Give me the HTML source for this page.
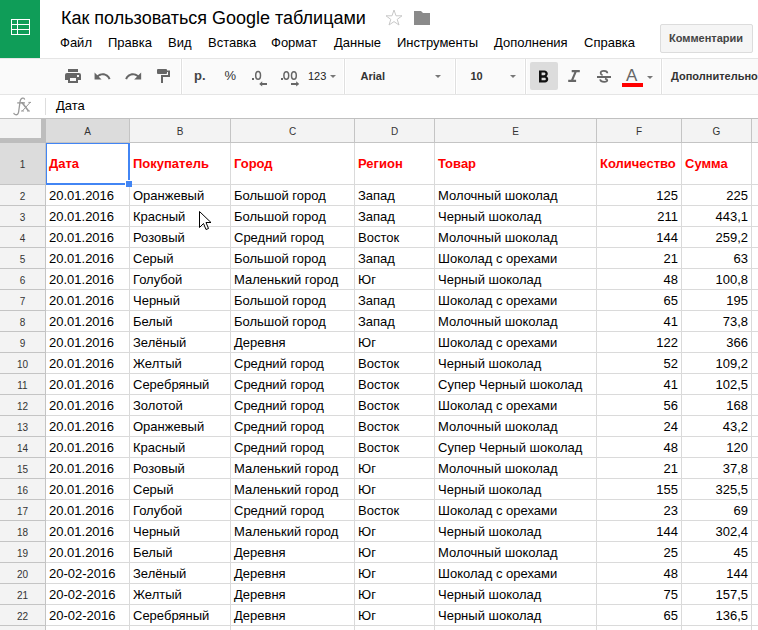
<!DOCTYPE html>
<html><head><meta charset="utf-8">
<style>
html,body{margin:0;padding:0;}
body{width:758px;height:630px;overflow:hidden;position:relative;background:#fff;font-family:"Liberation Sans",sans-serif;}
.a{position:absolute;}
.t{position:absolute;white-space:nowrap;line-height:1;}
/* header */
#logo{left:0;top:0;width:40px;height:58px;background:#0f9d58;}
#title{left:61px;top:9px;font-size:18px;color:#000;}
.menu{top:36px;font-size:13px;color:#000;}
#btn{left:660px;top:24px;width:91px;height:27px;border:1px solid #dcdcdc;border-radius:2px;background:#f5f5f5;}
#btn span{position:absolute;left:8px;top:8px;font-size:11px;font-weight:bold;color:#444;white-space:nowrap;line-height:1;}
/* toolbar */
#tb{left:0;top:58px;width:758px;height:35px;border-top:1px solid #e5e5e5;border-bottom:1px solid #e5e5e5;background:#fafafa;}
.sep{position:absolute;top:59px;width:1px;height:35px;background:#e0e0e0;box-shadow:-1px 0 #fff,1px 0 #fff;}
.tbt{top:69px;font-size:11px;font-weight:bold;color:#333;}
.dd{position:absolute;width:0;height:0;border-left:3px solid transparent;border-right:3px solid transparent;border-top:3px solid #777;}
/* formula bar */
#fx{left:13px;top:96px;font-family:"Liberation Serif",serif;font-style:italic;font-size:20px;color:#aaa;}
#fxsep{left:45px;top:98px;width:1px;height:17px;background:#ddd;}
#fval{left:56px;top:99px;font-size:13px;color:#000;}
#fbb{left:0;top:118px;width:758px;height:1px;background:#c0c0c0;}
/* grid */
.vl{position:absolute;top:143px;width:1px;height:487px;background:#dadada;}
.hl{position:absolute;left:46px;width:712px;height:1px;background:#dadada;}
.c{position:absolute;overflow:hidden;font-size:13px;color:#000;}
.c span{position:absolute;left:3px;bottom:2px;line-height:15px;white-space:nowrap;}
.c.num span{left:auto;right:3px;}
.c.hd{color:#f00;font-weight:bold;}
.c.hd span{bottom:13px;}
.rh{position:absolute;left:0;width:45px;background:#f3f3f3;font-size:10px;color:#333;text-align:center;}
.rh.sel{background:#dcdcdc;}
.rh span{position:absolute;left:0;right:0;bottom:3px;line-height:10px;}
.rh.sel span{bottom:14px;}
.rhl{position:absolute;left:0;width:45px;height:1px;background:#c4c4c4;}
#rhr{left:45px;top:143px;width:1px;height:487px;background:#c4c4c4;}
.ch{position:absolute;top:119px;height:23px;background:#f3f3f3;font-size:10px;color:#333;text-align:center;}
.ch.sel{background:#dcdcdc;}
.ch span{position:absolute;left:0;right:0;top:8px;line-height:10px;}
.chl{position:absolute;top:119px;width:1px;height:23px;background:#c4c4c4;}
#chb{left:46px;top:142px;width:712px;height:1px;background:#c4c4c4;}
#corner{left:0;top:119px;width:41px;height:19px;background:#f3f3f3;}
#fr1{left:41px;top:119px;width:5px;height:24px;background:#bdbdbd;}
#fr2{left:0;top:138px;width:46px;height:5px;background:#bdbdbd;}
/* selection */
#selL{left:46px;top:143px;width:1px;height:42px;background:#4285f4;}
#selT{left:46px;top:143px;width:84px;height:1px;background:#4285f4;}
#selR{left:128px;top:143px;width:2px;height:37px;background:#4285f4;}
#selB{left:46px;top:183px;width:79px;height:2px;background:#4285f4;}
#handle{left:126px;top:181px;width:6px;height:6px;background:#4285f4;box-shadow:-1px -1px 0 #fff;}
</style></head><body>
<div class="a" id="logo">
<svg width="40" height="58" style="position:absolute;left:0;top:0">
<g fill="none" stroke="#fff" stroke-width="1">
<rect x="11.5" y="19.5" width="18" height="15"/>
<line x1="11" y1="24.5" x2="30" y2="24.5"/>
<line x1="11" y1="29.5" x2="30" y2="29.5"/>
<line x1="17.5" y1="19" x2="17.5" y2="35"/>
</g></svg>
</div>
<div class="t" id="title">Как пользоваться Google таблицами</div>
<svg class="a" style="left:385px;top:9px" width="18" height="17" viewBox="0 0 18 17">
<polygon points="9,1 11,6.8 17,6.8 12.2,10.4 14,16 9,12.6 4,16 5.8,10.4 1,6.8 7,6.8" fill="none" stroke="#c8c8c8" stroke-width="1"/>
</svg>
<svg class="a" style="left:414px;top:11px" width="16" height="14" viewBox="0 0 16 14">
<path d="M0 0H7L9 2H16V14H0Z" fill="#8a8a8a"/>
</svg>
<div class="t menu" style="left:60px">Файл</div>
<div class="t menu" style="left:108px">Правка</div>
<div class="t menu" style="left:168px">Вид</div>
<div class="t menu" style="left:208px">Вставка</div>
<div class="t menu" style="left:271px">Формат</div>
<div class="t menu" style="left:334px">Данные</div>
<div class="t menu" style="left:397px">Инструменты</div>
<div class="t menu" style="left:494px">Дополнения</div>
<div class="t menu" style="left:584px">Справка</div>
<div class="a" id="btn"><span>Комментарии</span></div>

<div class="a" id="tb"></div>
<div class="sep" style="left:181px"></div>
<div class="sep" style="left:344px"></div>
<div class="sep" style="left:455px"></div>
<div class="sep" style="left:525px"></div>
<div class="sep" style="left:661px"></div>
<!-- print -->
<svg class="a" style="left:64px;top:68px" width="18" height="16" viewBox="64 68 18 16"><rect x="68" y="69" width="10" height="3" fill="#666"/><path fill="#666" fill-rule="evenodd" d="M67 73H79A2 2 0 0 1 81 75V80H78V83H68V80H65V75A2 2 0 0 1 67 73ZM70 78V81H76V78ZM77 75V77H79V75Z"/></svg>
<!-- undo -->
<svg class="a" style="left:93.44px;top:66.54px" width="18.72" height="18.72" viewBox="0 0 24 24"><path fill="#666" d="M12.5 8c-2.650 0-5.05.99-6.9 2.6L2 7v9h9l-3.62-3.62c1.39-1.16 3.16-1.88 5.12-1.88 3.54 0 6.55 2.31 7.6 5.5l2.37-.78C21.08 11.03 17.15 8 12.5 8z"/></svg>
<!-- redo -->
<svg class="a" style="left:123.8px;top:66.54px" width="18.72" height="18.72" viewBox="0 0 24 24"><path fill="#666" d="M18.4 10.6C16.55 8.99 14.15 8 11.5 8c-4.65 0-8.58 3.03-9.96 7.22L3.9 16c1.05-3.19 4.05-5.5 7.6-5.5 1.95 0 3.73.72 5.12 1.88L13 16h9V7l-3.6 3.6z"/></svg>
<!-- paint format -->
<svg class="a" style="left:156px;top:68px" width="15" height="16" viewBox="0 0 15 16">
<rect x="1" y="1" width="10" height="5" rx="1" fill="#666"/>
<path d="M11 2.6H14V9H7V15H5V7H12V4H11Z" fill="#666"/>
</svg>
<div class="t" style="left:194px;top:69px;font-size:13px;font-weight:bold;color:#444">р.</div>
<div class="t" style="left:224.5px;top:68.5px;font-size:13px;color:#333">%</div>
<svg class="a" style="left:250px;top:69px" width="20" height="19" viewBox="250 69 20 19"><rect x="252" y="78" width="2" height="2" fill="#666"/><ellipse cx="258.1" cy="75.4" rx="2.4" ry="3.8" fill="none" stroke="#666" stroke-width="1.5"/><path d="M259.2 83.9L262.2 81.2V83H267V85H262.2V86.6Z" fill="#666"/></svg>
<svg class="a" style="left:279px;top:69px" width="21" height="19" viewBox="279 69 21 19"><rect x="281" y="78" width="2" height="2" fill="#666"/><ellipse cx="286.3" cy="75.5" rx="2.4" ry="3.8" fill="none" stroke="#666" stroke-width="1.5"/><ellipse cx="293.9" cy="75.5" rx="2.4" ry="3.8" fill="none" stroke="#666" stroke-width="1.5"/><path d="M299.2 83.9L296.2 81.2V83H291V85H296.2V86.6Z" fill="#666"/></svg>
<div class="t" style="left:308px;top:71px;font-size:11px;color:#222">123</div>
<div class="dd" style="left:330px;top:75px"></div>
<div class="t tbt" style="left:360.5px;top:71px">Arial</div>
<div class="dd" style="left:435px;top:75px"></div>
<div class="t tbt" style="left:470.5px;top:71px">10</div>
<div class="dd" style="left:510px;top:75px"></div>
<div class="a" style="left:530px;top:62px;width:28px;height:28px;border-radius:2px;background:#dcdcdc"></div>
<svg class="a" style="left:533px;top:66.5px" width="20.6" height="20.6" viewBox="0 0 24 24"><path fill="#111" d="M15.6 10.79c.97-.67 1.65-1.77 1.65-2.79 0-2.26-1.75-4-4-4H7v14h7.04c2.09 0 3.71-1.7 3.71-3.79 0-1.52-.86-2.82-2.150-3.42zM10 6.5h3c.83 0 1.5.67 1.5 1.5s-.67 1.5-1.5 1.5h-3v-3zm3.5 9H10v-3h3.5c.83 0 1.5.67 1.5 1.5s-.67 1.5-1.5 1.5z"/></svg>
<svg class="a" style="left:566px;top:68px" width="16" height="16" viewBox="566 68 16 16"><path fill="#666" d="M571.7 69.9H579.8V72.3H576.6L573.4 79.8H576.1V82H568.2V79.8H571.1L574.3 72.3H571.7Z"/></svg>
<svg class="a" style="left:594px;top:66px" width="20" height="20" viewBox="594 66 20 20"><rect x="597" y="76" width="14" height="2" fill="#666"/><path d="M607.4 73.2C607.3 71.5 605.8 70.8 603.9 70.8C601.8 70.8 600.6 71.8 600.6 73.1C600.6 74.2 601.4 74.9 602.6 75.3" fill="none" stroke="#666" stroke-width="1.7"/><path d="M605 78.6C606.6 79.1 607.3 79.8 607.3 80.3C607.3 81.4 606 81.9 604.2 81.9C601.9 81.9 600.4 81 600.1 79.4" fill="none" stroke="#666" stroke-width="1.7"/></svg>
<div class="t" style="left:626px;top:67px;font-size:17px;color:#666">A</div>
<div class="a" style="left:622px;top:83px;width:21px;height:4px;background:#f00"></div>
<div class="dd" style="left:647px;top:76px"></div>
<div class="t tbt" style="left:671px;top:71px">Дополнительно</div>

<svg class="a" style="left:10px;top:95px" width="24" height="22" viewBox="10 95 24 22"><g fill="none" stroke="#999" stroke-width="1.3"><path d="M24.6 99.6C24.5 98.3 23.4 97.9 22.4 98.2C20.8 98.7 20.2 100.3 20 102L18.6 112C18.3 114 17.2 115 15.6 114.7C14.6 114.5 13.9 113.7 13.7 112.8"/><path d="M17.2 102.9H25"/><path d="M22 102.6L28.5 111" stroke-width="1.6"/><path d="M30.2 102.4L22.3 111" stroke-width="1"/><path d="M21 111H24M27.2 111H30M20.8 102.6H23.5M28.4 102.4H31" stroke-width="1"/></g></svg>
<div class="a" id="fxsep"></div>
<div class="t" id="fval">Дата</div>
<div class="a" id="fbb"></div>

<div class="vl" style="left:129px"></div>
<div class="vl" style="left:230px"></div>
<div class="vl" style="left:354px"></div>
<div class="vl" style="left:434px"></div>
<div class="vl" style="left:596px"></div>
<div class="vl" style="left:681px"></div>
<div class="vl" style="left:751px"></div>
<div class="hl" style="top:184px"></div>
<div class="hl" style="top:205px"></div>
<div class="hl" style="top:226px"></div>
<div class="hl" style="top:247px"></div>
<div class="hl" style="top:268px"></div>
<div class="hl" style="top:289px"></div>
<div class="hl" style="top:310px"></div>
<div class="hl" style="top:331px"></div>
<div class="hl" style="top:352px"></div>
<div class="hl" style="top:373px"></div>
<div class="hl" style="top:394px"></div>
<div class="hl" style="top:415px"></div>
<div class="hl" style="top:436px"></div>
<div class="hl" style="top:457px"></div>
<div class="hl" style="top:478px"></div>
<div class="hl" style="top:499px"></div>
<div class="hl" style="top:520px"></div>
<div class="hl" style="top:541px"></div>
<div class="hl" style="top:562px"></div>
<div class="hl" style="top:583px"></div>
<div class="hl" style="top:604px"></div>
<div class="hl" style="top:625px"></div>
<div class="c hd" style="left:46px;top:143px;width:83px;height:41px"><span>Дата</span></div>
<div class="c hd" style="left:130px;top:143px;width:100px;height:41px"><span>Покупатель</span></div>
<div class="c hd" style="left:231px;top:143px;width:123px;height:41px"><span>Город</span></div>
<div class="c hd" style="left:355px;top:143px;width:79px;height:41px"><span>Регион</span></div>
<div class="c hd" style="left:435px;top:143px;width:161px;height:41px"><span>Товар</span></div>
<div class="c hd" style="left:597px;top:143px;width:84px;height:41px"><span>Количество</span></div>
<div class="c hd" style="left:682px;top:143px;width:69px;height:41px"><span>Сумма</span></div>
<div class="c" style="left:46px;top:185px;width:83px;height:20px"><span>20.01.2016</span></div>
<div class="c" style="left:130px;top:185px;width:100px;height:20px"><span>Оранжевый</span></div>
<div class="c" style="left:231px;top:185px;width:123px;height:20px"><span>Большой город</span></div>
<div class="c" style="left:355px;top:185px;width:79px;height:20px"><span>Запад</span></div>
<div class="c" style="left:435px;top:185px;width:161px;height:20px"><span>Молочный шоколад</span></div>
<div class="c num" style="left:597px;top:185px;width:84px;height:20px"><span>125</span></div>
<div class="c num" style="left:682px;top:185px;width:69px;height:20px"><span>225</span></div>
<div class="c" style="left:46px;top:206px;width:83px;height:20px"><span>20.01.2016</span></div>
<div class="c" style="left:130px;top:206px;width:100px;height:20px"><span>Красный</span></div>
<div class="c" style="left:231px;top:206px;width:123px;height:20px"><span>Большой город</span></div>
<div class="c" style="left:355px;top:206px;width:79px;height:20px"><span>Запад</span></div>
<div class="c" style="left:435px;top:206px;width:161px;height:20px"><span>Черный шоколад</span></div>
<div class="c num" style="left:597px;top:206px;width:84px;height:20px"><span>211</span></div>
<div class="c num" style="left:682px;top:206px;width:69px;height:20px"><span>443,1</span></div>
<div class="c" style="left:46px;top:227px;width:83px;height:20px"><span>20.01.2016</span></div>
<div class="c" style="left:130px;top:227px;width:100px;height:20px"><span>Розовый</span></div>
<div class="c" style="left:231px;top:227px;width:123px;height:20px"><span>Средний город</span></div>
<div class="c" style="left:355px;top:227px;width:79px;height:20px"><span>Восток</span></div>
<div class="c" style="left:435px;top:227px;width:161px;height:20px"><span>Молочный шоколад</span></div>
<div class="c num" style="left:597px;top:227px;width:84px;height:20px"><span>144</span></div>
<div class="c num" style="left:682px;top:227px;width:69px;height:20px"><span>259,2</span></div>
<div class="c" style="left:46px;top:248px;width:83px;height:20px"><span>20.01.2016</span></div>
<div class="c" style="left:130px;top:248px;width:100px;height:20px"><span>Серый</span></div>
<div class="c" style="left:231px;top:248px;width:123px;height:20px"><span>Большой город</span></div>
<div class="c" style="left:355px;top:248px;width:79px;height:20px"><span>Запад</span></div>
<div class="c" style="left:435px;top:248px;width:161px;height:20px"><span>Шоколад с орехами</span></div>
<div class="c num" style="left:597px;top:248px;width:84px;height:20px"><span>21</span></div>
<div class="c num" style="left:682px;top:248px;width:69px;height:20px"><span>63</span></div>
<div class="c" style="left:46px;top:269px;width:83px;height:20px"><span>20.01.2016</span></div>
<div class="c" style="left:130px;top:269px;width:100px;height:20px"><span>Голубой</span></div>
<div class="c" style="left:231px;top:269px;width:123px;height:20px"><span>Маленький город</span></div>
<div class="c" style="left:355px;top:269px;width:79px;height:20px"><span>Юг</span></div>
<div class="c" style="left:435px;top:269px;width:161px;height:20px"><span>Черный шоколад</span></div>
<div class="c num" style="left:597px;top:269px;width:84px;height:20px"><span>48</span></div>
<div class="c num" style="left:682px;top:269px;width:69px;height:20px"><span>100,8</span></div>
<div class="c" style="left:46px;top:290px;width:83px;height:20px"><span>20.01.2016</span></div>
<div class="c" style="left:130px;top:290px;width:100px;height:20px"><span>Черный</span></div>
<div class="c" style="left:231px;top:290px;width:123px;height:20px"><span>Большой город</span></div>
<div class="c" style="left:355px;top:290px;width:79px;height:20px"><span>Запад</span></div>
<div class="c" style="left:435px;top:290px;width:161px;height:20px"><span>Шоколад с орехами</span></div>
<div class="c num" style="left:597px;top:290px;width:84px;height:20px"><span>65</span></div>
<div class="c num" style="left:682px;top:290px;width:69px;height:20px"><span>195</span></div>
<div class="c" style="left:46px;top:311px;width:83px;height:20px"><span>20.01.2016</span></div>
<div class="c" style="left:130px;top:311px;width:100px;height:20px"><span>Белый</span></div>
<div class="c" style="left:231px;top:311px;width:123px;height:20px"><span>Большой город</span></div>
<div class="c" style="left:355px;top:311px;width:79px;height:20px"><span>Запад</span></div>
<div class="c" style="left:435px;top:311px;width:161px;height:20px"><span>Молочный шоколад</span></div>
<div class="c num" style="left:597px;top:311px;width:84px;height:20px"><span>41</span></div>
<div class="c num" style="left:682px;top:311px;width:69px;height:20px"><span>73,8</span></div>
<div class="c" style="left:46px;top:332px;width:83px;height:20px"><span>20.01.2016</span></div>
<div class="c" style="left:130px;top:332px;width:100px;height:20px"><span>Зелёный</span></div>
<div class="c" style="left:231px;top:332px;width:123px;height:20px"><span>Деревня</span></div>
<div class="c" style="left:355px;top:332px;width:79px;height:20px"><span>Юг</span></div>
<div class="c" style="left:435px;top:332px;width:161px;height:20px"><span>Шоколад с орехами</span></div>
<div class="c num" style="left:597px;top:332px;width:84px;height:20px"><span>122</span></div>
<div class="c num" style="left:682px;top:332px;width:69px;height:20px"><span>366</span></div>
<div class="c" style="left:46px;top:353px;width:83px;height:20px"><span>20.01.2016</span></div>
<div class="c" style="left:130px;top:353px;width:100px;height:20px"><span>Желтый</span></div>
<div class="c" style="left:231px;top:353px;width:123px;height:20px"><span>Средний город</span></div>
<div class="c" style="left:355px;top:353px;width:79px;height:20px"><span>Восток</span></div>
<div class="c" style="left:435px;top:353px;width:161px;height:20px"><span>Черный шоколад</span></div>
<div class="c num" style="left:597px;top:353px;width:84px;height:20px"><span>52</span></div>
<div class="c num" style="left:682px;top:353px;width:69px;height:20px"><span>109,2</span></div>
<div class="c" style="left:46px;top:374px;width:83px;height:20px"><span>20.01.2016</span></div>
<div class="c" style="left:130px;top:374px;width:100px;height:20px"><span>Серебряный</span></div>
<div class="c" style="left:231px;top:374px;width:123px;height:20px"><span>Средний город</span></div>
<div class="c" style="left:355px;top:374px;width:79px;height:20px"><span>Восток</span></div>
<div class="c" style="left:435px;top:374px;width:161px;height:20px"><span>Супер Черный шоколад</span></div>
<div class="c num" style="left:597px;top:374px;width:84px;height:20px"><span>41</span></div>
<div class="c num" style="left:682px;top:374px;width:69px;height:20px"><span>102,5</span></div>
<div class="c" style="left:46px;top:395px;width:83px;height:20px"><span>20.01.2016</span></div>
<div class="c" style="left:130px;top:395px;width:100px;height:20px"><span>Золотой</span></div>
<div class="c" style="left:231px;top:395px;width:123px;height:20px"><span>Средний город</span></div>
<div class="c" style="left:355px;top:395px;width:79px;height:20px"><span>Восток</span></div>
<div class="c" style="left:435px;top:395px;width:161px;height:20px"><span>Шоколад с орехами</span></div>
<div class="c num" style="left:597px;top:395px;width:84px;height:20px"><span>56</span></div>
<div class="c num" style="left:682px;top:395px;width:69px;height:20px"><span>168</span></div>
<div class="c" style="left:46px;top:416px;width:83px;height:20px"><span>20.01.2016</span></div>
<div class="c" style="left:130px;top:416px;width:100px;height:20px"><span>Оранжевый</span></div>
<div class="c" style="left:231px;top:416px;width:123px;height:20px"><span>Средний город</span></div>
<div class="c" style="left:355px;top:416px;width:79px;height:20px"><span>Восток</span></div>
<div class="c" style="left:435px;top:416px;width:161px;height:20px"><span>Молочный шоколад</span></div>
<div class="c num" style="left:597px;top:416px;width:84px;height:20px"><span>24</span></div>
<div class="c num" style="left:682px;top:416px;width:69px;height:20px"><span>43,2</span></div>
<div class="c" style="left:46px;top:437px;width:83px;height:20px"><span>20.01.2016</span></div>
<div class="c" style="left:130px;top:437px;width:100px;height:20px"><span>Красный</span></div>
<div class="c" style="left:231px;top:437px;width:123px;height:20px"><span>Средний город</span></div>
<div class="c" style="left:355px;top:437px;width:79px;height:20px"><span>Восток</span></div>
<div class="c" style="left:435px;top:437px;width:161px;height:20px"><span>Супер Черный шоколад</span></div>
<div class="c num" style="left:597px;top:437px;width:84px;height:20px"><span>48</span></div>
<div class="c num" style="left:682px;top:437px;width:69px;height:20px"><span>120</span></div>
<div class="c" style="left:46px;top:458px;width:83px;height:20px"><span>20.01.2016</span></div>
<div class="c" style="left:130px;top:458px;width:100px;height:20px"><span>Розовый</span></div>
<div class="c" style="left:231px;top:458px;width:123px;height:20px"><span>Маленький город</span></div>
<div class="c" style="left:355px;top:458px;width:79px;height:20px"><span>Юг</span></div>
<div class="c" style="left:435px;top:458px;width:161px;height:20px"><span>Молочный шоколад</span></div>
<div class="c num" style="left:597px;top:458px;width:84px;height:20px"><span>21</span></div>
<div class="c num" style="left:682px;top:458px;width:69px;height:20px"><span>37,8</span></div>
<div class="c" style="left:46px;top:479px;width:83px;height:20px"><span>20.01.2016</span></div>
<div class="c" style="left:130px;top:479px;width:100px;height:20px"><span>Серый</span></div>
<div class="c" style="left:231px;top:479px;width:123px;height:20px"><span>Маленький город</span></div>
<div class="c" style="left:355px;top:479px;width:79px;height:20px"><span>Юг</span></div>
<div class="c" style="left:435px;top:479px;width:161px;height:20px"><span>Черный шоколад</span></div>
<div class="c num" style="left:597px;top:479px;width:84px;height:20px"><span>155</span></div>
<div class="c num" style="left:682px;top:479px;width:69px;height:20px"><span>325,5</span></div>
<div class="c" style="left:46px;top:500px;width:83px;height:20px"><span>20.01.2016</span></div>
<div class="c" style="left:130px;top:500px;width:100px;height:20px"><span>Голубой</span></div>
<div class="c" style="left:231px;top:500px;width:123px;height:20px"><span>Средний город</span></div>
<div class="c" style="left:355px;top:500px;width:79px;height:20px"><span>Восток</span></div>
<div class="c" style="left:435px;top:500px;width:161px;height:20px"><span>Шоколад с орехами</span></div>
<div class="c num" style="left:597px;top:500px;width:84px;height:20px"><span>23</span></div>
<div class="c num" style="left:682px;top:500px;width:69px;height:20px"><span>69</span></div>
<div class="c" style="left:46px;top:521px;width:83px;height:20px"><span>20.01.2016</span></div>
<div class="c" style="left:130px;top:521px;width:100px;height:20px"><span>Черный</span></div>
<div class="c" style="left:231px;top:521px;width:123px;height:20px"><span>Маленький город</span></div>
<div class="c" style="left:355px;top:521px;width:79px;height:20px"><span>Юг</span></div>
<div class="c" style="left:435px;top:521px;width:161px;height:20px"><span>Черный шоколад</span></div>
<div class="c num" style="left:597px;top:521px;width:84px;height:20px"><span>144</span></div>
<div class="c num" style="left:682px;top:521px;width:69px;height:20px"><span>302,4</span></div>
<div class="c" style="left:46px;top:542px;width:83px;height:20px"><span>20.01.2016</span></div>
<div class="c" style="left:130px;top:542px;width:100px;height:20px"><span>Белый</span></div>
<div class="c" style="left:231px;top:542px;width:123px;height:20px"><span>Деревня</span></div>
<div class="c" style="left:355px;top:542px;width:79px;height:20px"><span>Юг</span></div>
<div class="c" style="left:435px;top:542px;width:161px;height:20px"><span>Молочный шоколад</span></div>
<div class="c num" style="left:597px;top:542px;width:84px;height:20px"><span>25</span></div>
<div class="c num" style="left:682px;top:542px;width:69px;height:20px"><span>45</span></div>
<div class="c" style="left:46px;top:563px;width:83px;height:20px"><span>20-02-2016</span></div>
<div class="c" style="left:130px;top:563px;width:100px;height:20px"><span>Зелёный</span></div>
<div class="c" style="left:231px;top:563px;width:123px;height:20px"><span>Деревня</span></div>
<div class="c" style="left:355px;top:563px;width:79px;height:20px"><span>Юг</span></div>
<div class="c" style="left:435px;top:563px;width:161px;height:20px"><span>Шоколад с орехами</span></div>
<div class="c num" style="left:597px;top:563px;width:84px;height:20px"><span>48</span></div>
<div class="c num" style="left:682px;top:563px;width:69px;height:20px"><span>144</span></div>
<div class="c" style="left:46px;top:584px;width:83px;height:20px"><span>20-02-2016</span></div>
<div class="c" style="left:130px;top:584px;width:100px;height:20px"><span>Желтый</span></div>
<div class="c" style="left:231px;top:584px;width:123px;height:20px"><span>Деревня</span></div>
<div class="c" style="left:355px;top:584px;width:79px;height:20px"><span>Юг</span></div>
<div class="c" style="left:435px;top:584px;width:161px;height:20px"><span>Черный шоколад</span></div>
<div class="c num" style="left:597px;top:584px;width:84px;height:20px"><span>75</span></div>
<div class="c num" style="left:682px;top:584px;width:69px;height:20px"><span>157,5</span></div>
<div class="c" style="left:46px;top:605px;width:83px;height:20px"><span>20-02-2016</span></div>
<div class="c" style="left:130px;top:605px;width:100px;height:20px"><span>Серебряный</span></div>
<div class="c" style="left:231px;top:605px;width:123px;height:20px"><span>Деревня</span></div>
<div class="c" style="left:355px;top:605px;width:79px;height:20px"><span>Юг</span></div>
<div class="c" style="left:435px;top:605px;width:161px;height:20px"><span>Черный шоколад</span></div>
<div class="c num" style="left:597px;top:605px;width:84px;height:20px"><span>65</span></div>
<div class="c num" style="left:682px;top:605px;width:69px;height:20px"><span>136,5</span></div>
<div class="rh sel" style="top:143px;height:41px"><span>1</span></div>
<div class="rhl" style="top:184px"></div>
<div class="rh" style="top:185px;height:20px"><span>2</span></div>
<div class="rhl" style="top:205px"></div>
<div class="rh" style="top:206px;height:20px"><span>3</span></div>
<div class="rhl" style="top:226px"></div>
<div class="rh" style="top:227px;height:20px"><span>4</span></div>
<div class="rhl" style="top:247px"></div>
<div class="rh" style="top:248px;height:20px"><span>5</span></div>
<div class="rhl" style="top:268px"></div>
<div class="rh" style="top:269px;height:20px"><span>6</span></div>
<div class="rhl" style="top:289px"></div>
<div class="rh" style="top:290px;height:20px"><span>7</span></div>
<div class="rhl" style="top:310px"></div>
<div class="rh" style="top:311px;height:20px"><span>8</span></div>
<div class="rhl" style="top:331px"></div>
<div class="rh" style="top:332px;height:20px"><span>9</span></div>
<div class="rhl" style="top:352px"></div>
<div class="rh" style="top:353px;height:20px"><span>10</span></div>
<div class="rhl" style="top:373px"></div>
<div class="rh" style="top:374px;height:20px"><span>11</span></div>
<div class="rhl" style="top:394px"></div>
<div class="rh" style="top:395px;height:20px"><span>12</span></div>
<div class="rhl" style="top:415px"></div>
<div class="rh" style="top:416px;height:20px"><span>13</span></div>
<div class="rhl" style="top:436px"></div>
<div class="rh" style="top:437px;height:20px"><span>14</span></div>
<div class="rhl" style="top:457px"></div>
<div class="rh" style="top:458px;height:20px"><span>15</span></div>
<div class="rhl" style="top:478px"></div>
<div class="rh" style="top:479px;height:20px"><span>16</span></div>
<div class="rhl" style="top:499px"></div>
<div class="rh" style="top:500px;height:20px"><span>17</span></div>
<div class="rhl" style="top:520px"></div>
<div class="rh" style="top:521px;height:20px"><span>18</span></div>
<div class="rhl" style="top:541px"></div>
<div class="rh" style="top:542px;height:20px"><span>19</span></div>
<div class="rhl" style="top:562px"></div>
<div class="rh" style="top:563px;height:20px"><span>20</span></div>
<div class="rhl" style="top:583px"></div>
<div class="rh" style="top:584px;height:20px"><span>21</span></div>
<div class="rhl" style="top:604px"></div>
<div class="rh" style="top:605px;height:20px"><span>22</span></div>
<div class="rhl" style="top:625px"></div>
<div class="rh" style="top:626px;height:20px"><span>23</span></div>
<div class="rhl" style="top:646px"></div>
<div class="ch sel" style="left:46px;width:83px"><span>A</span></div>
<div class="chl" style="left:129px"></div>
<div class="ch" style="left:130px;width:100px"><span>B</span></div>
<div class="chl" style="left:230px"></div>
<div class="ch" style="left:231px;width:123px"><span>C</span></div>
<div class="chl" style="left:354px"></div>
<div class="ch" style="left:355px;width:79px"><span>D</span></div>
<div class="chl" style="left:434px"></div>
<div class="ch" style="left:435px;width:161px"><span>E</span></div>
<div class="chl" style="left:596px"></div>
<div class="ch" style="left:597px;width:84px"><span>F</span></div>
<div class="chl" style="left:681px"></div>
<div class="ch" style="left:682px;width:69px"><span>G</span></div>
<div class="chl" style="left:751px"></div>
<div class="ch" style="left:752px;width:8px"><span></span></div>
<div class="a" id="rhr"></div>
<div class="a" id="chb"></div>
<div class="a" id="corner"></div>
<div class="a" id="fr1"></div>
<div class="a" id="fr2"></div>
<div class="a" id="selL"></div>
<div class="a" id="selT"></div>
<div class="a" id="selR"></div>
<div class="a" id="selB"></div>
<div class="a" id="handle"></div>
<svg class="a" style="left:198px;top:210px" width="14" height="21" viewBox="0 0 14 21">
<path d="M1.5 1.5V17.5L5.5 13.5L8 19.5L10.5 18.5L8 12.5H13Z" fill="#fff" stroke="#000" stroke-width="1" stroke-linejoin="miter"/>
</svg>
</body></html>
